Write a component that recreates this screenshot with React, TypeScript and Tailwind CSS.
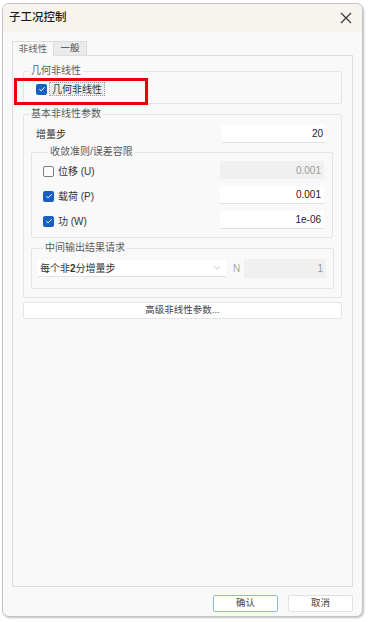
import React from "react";
import { ChevronDown } from "lucide-react";

const font = { fontFamily: '"Liberation Sans", "Noto Sans CJK SC", sans-serif' };

const Check = ({ checked }: { checked: boolean }) =>
  checked ? (
    <span className="w-[11px] h-[11px] rounded-[2px] bg-[#1760c0] flex items-center justify-center shrink-0">
      <svg width="8" height="8" viewBox="0 0 8 8">
        <path d="M1.3 4.2 L3.1 5.9 L6.7 2.2" fill="none" stroke="white" strokeWidth="1" />
      </svg>
    </span>
  ) : (
    <span className="w-[11px] h-[11px] rounded-[2px] border border-[#7d7d7d] bg-[#fbfbfb] shrink-0" />
  );

const Group = ({
  title,
  className,
  children,
}: {
  title: string;
  className: string;
  children: React.ReactNode;
}) => (
  <fieldset className={`border border-[#e4e4e4] rounded-[2px] ${className}`}>
    <legend className="ml-[5px] px-[2px] text-[10px] leading-[12px] text-[#5a5a5a]">{title}</legend>
    {children}
  </fieldset>
);

const Field = ({ value, disabled }: { value: string; disabled?: boolean }) => (
  <div
    className={`w-[104px] h-[18px] flex items-center justify-end pr-[3px] text-[10px] ${
      disabled ? "bg-[#f0f0f0] text-[#9a9a9a]" : "bg-white text-[#222] border-b border-[#e2e2e2]"
    }`}
  >
    {value}
  </div>
);

const rows = [
  { label: "位移", code: "(U)", on: false, value: "0.001" },
  { label: "载荷", code: "(P)", on: true, value: "0.001" },
  { label: "功", code: "(W)", on: true, value: "1e-06" },
];

export default function App() {
  return (
    <div className="w-[369px] h-[622px] bg-white overflow-hidden relative" style={font}>
      <div className="ml-[2px] mt-[3px] w-[361px] h-[614px] rounded-[7px] border border-[#c4c4c4] bg-[#f9f9f9] overflow-hidden flex flex-col shadow-[1px_1px_2px_rgba(0,0,0,0.25)]">
        {/* Title bar */}
        <div className="h-[28px] bg-[#f7f3ee] flex items-center justify-between pl-[6px] pr-[8px] shrink-0">
          <span className="text-[11.5px] font-medium text-[#1b1b1b]">子工况控制</span>
          <svg width="12" height="12" viewBox="0 0 12 12" className="mr-[2px]">
            <path d="M1 1 L11 11 M11 1 L1 11" stroke="#333" strokeWidth="1.1" />
          </svg>
        </div>

        <div className="px-[9px] pt-[8px] flex flex-col">
          {/* Tabs */}
          <div className="flex items-end h-[15px]">
            <div className="w-[42px] h-[15px] border border-b-0 border-[#dcdcdc] bg-[#f9f9f9] flex items-center justify-center text-[9.5px] text-[#666] relative top-[1px]">
              非线性
            </div>
            <div className="w-[33px] h-[14px] border border-l-0 border-b-0 border-[#dcdcdc] bg-[#ebebeb] flex items-center justify-center text-[9.5px] text-[#444]">
              一般
            </div>
          </div>

          {/* Panel */}
          <div className="h-[532px] border border-[#dedede] bg-[#f9f9f9] px-[10px] pt-[9px]">
            <Group title="几何非线性" className="h-[39px]">
              <div className="flex items-center pl-[12px] mt-[5px]">
                <Check checked />
                <span className="ml-[2px] px-[2px] h-[14px] flex items-center text-[10px] text-[#333] bg-[#ececec] border border-dotted border-[#9c9c9c]">
                  几何非线性
                </span>
              </div>
            </Group>

            <Group title="基本非线性参数" className="mt-[4px] pb-[8px]">
              <div className="flex items-center justify-between pl-[12px] pr-[15px] mt-[5px]">
                <span className="text-[10px] text-[#333]">增量步</span>
                <Field value="20" />
              </div>

              <Group title="收敛准则/误差容限" className="mt-[3px] ml-[7px] mr-[8px] pl-[11px] pr-[8px] pb-[8px]">
                <div className="flex flex-col gap-[7px] mt-[3px]">
                  {rows.map((r) => (
                    <div key={r.label} className="flex items-center justify-between h-[18px]">
                      <div className="flex items-center gap-[4px] text-[10px] text-[#333] pt-[2px]">
                        <Check checked={r.on} />
                        <span>
                          {r.label} {r.code}
                        </span>
                      </div>
                      <Field value={r.value} disabled={!r.on} />
                    </div>
                  ))}
                </div>
              </Group>

              <Group title="中间输出结果请求" className="mt-[4px] ml-[7px] mr-[7px] pl-[6px] pr-[7px] pb-[10px]">
                <div className="flex items-center mt-[5px]">
                  <div className="w-[188px] h-[17px] bg-white border-b border-[#e2e2e2] flex items-center justify-between pl-[2px] pr-[4px] text-[10px] text-[#333]">
                    <span>
                      每个非<b>2</b>分增量步
                    </span>
                    <ChevronDown size={10} color="#999" strokeWidth={1.5} />
                  </div>
                  <span className="ml-[7px] text-[10px] text-[#aaa]">N</span>
                  <div className="ml-auto w-[82px] h-[19px] bg-[#f0f0f0] flex items-center justify-end pr-[3px] text-[10px] text-[#9a9a9a]">
                    1
                  </div>
                </div>
              </Group>
            </Group>

            <div className="mt-[4px] h-[17px] bg-white border border-[#e4e4e4] rounded-[2px] flex items-center justify-center text-[9.5px] text-[#444]">
              高级非线性参数...
            </div>
          </div>

          {/* Footer */}
          <div className="mt-[8px] flex justify-end gap-[10px]">
            <div className="w-[65px] h-[17px] bg-white border border-[#8fb8e8] rounded-[2px] flex items-center justify-center text-[9.5px] text-[#444]">
              确认
            </div>
            <div className="w-[65px] h-[17px] bg-white border border-[#e2e2e2] rounded-[2px] flex items-center justify-center text-[9.5px] text-[#444]">
              取消
            </div>
          </div>
        </div>
      </div>

      {/* annotation */}
      <div className="absolute left-[14px] top-[78px] w-[134px] h-[27px] border-[3px] border-[#ee0000]" />
    </div>
  );
}
